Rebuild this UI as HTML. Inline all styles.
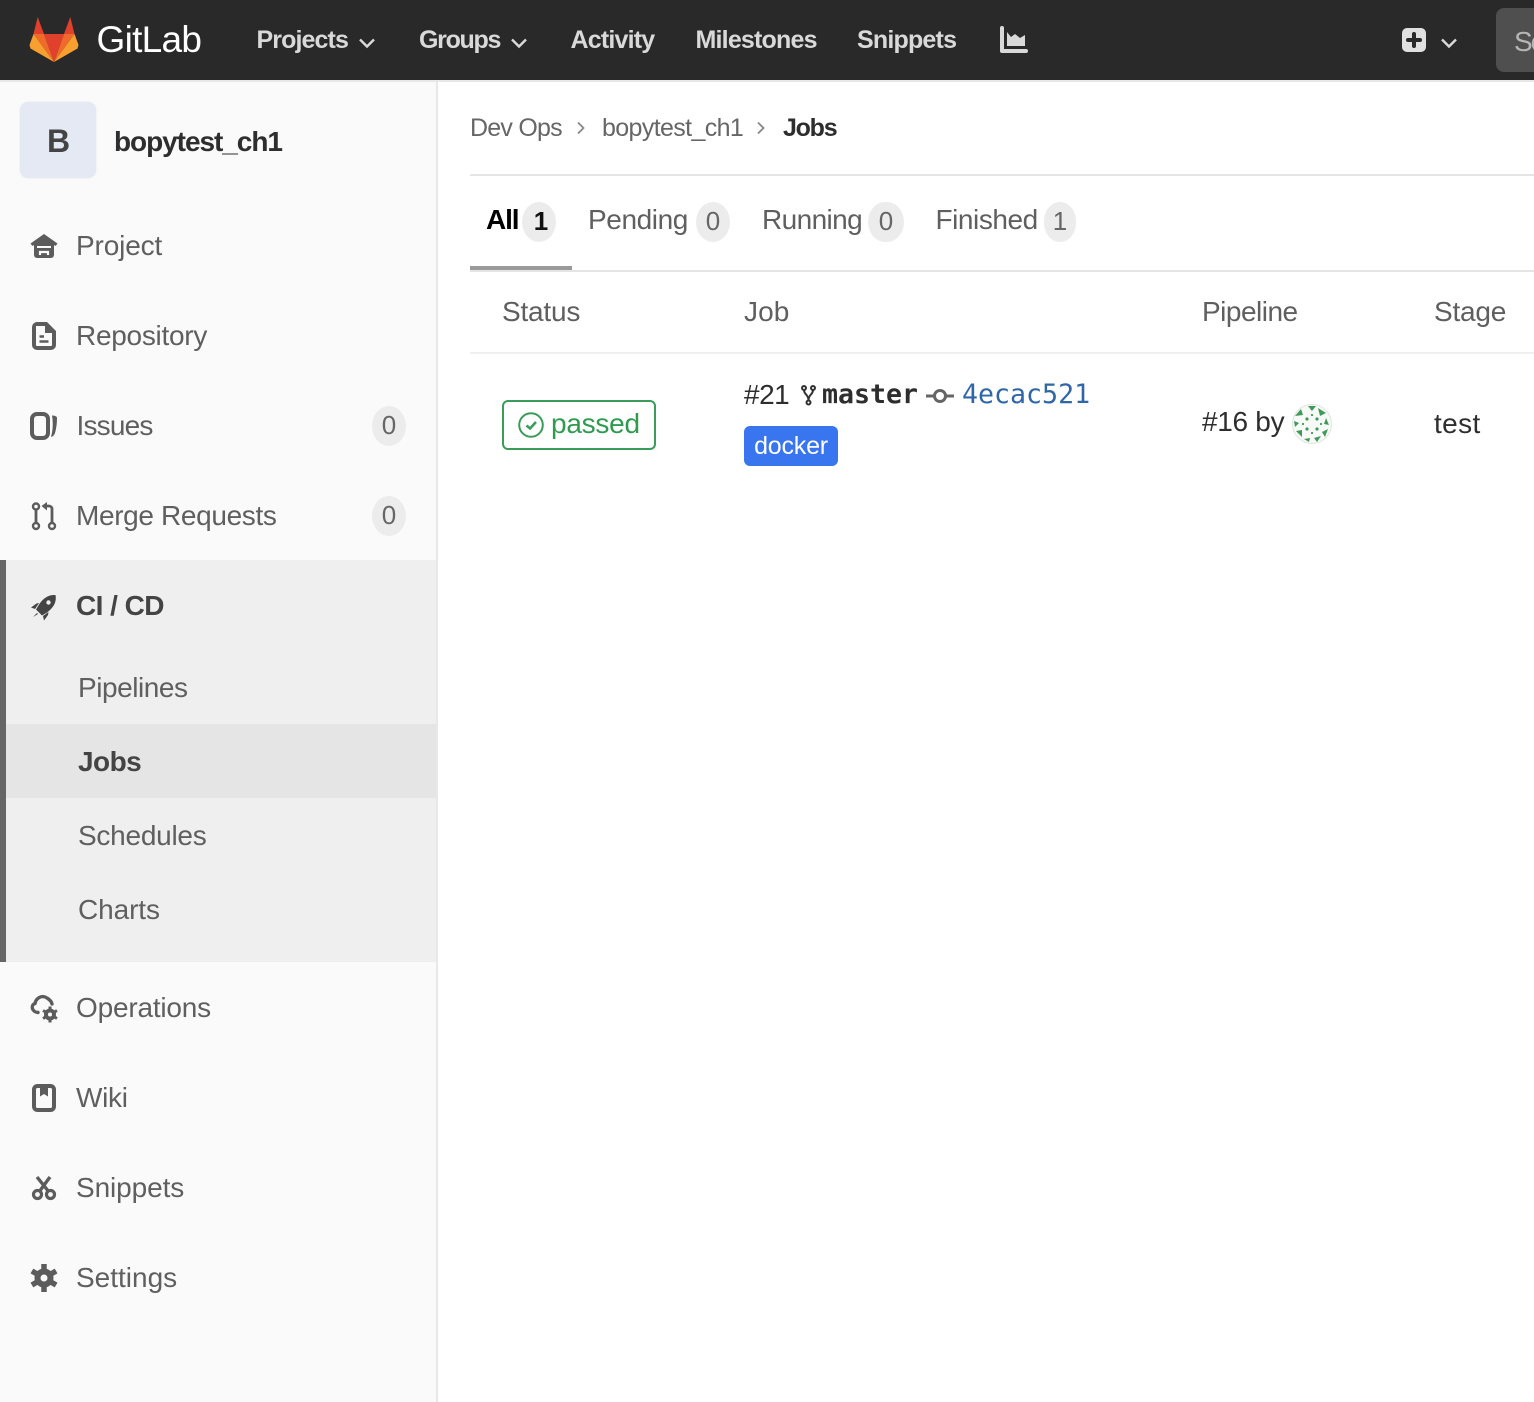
<!DOCTYPE html>
<html lang="en"><head><meta charset="utf-8"><title>Jobs · bopytest_ch1 · GitLab</title>
<style>
*{box-sizing:border-box}
html,body{margin:0;padding:0;width:1534px;height:1402px;overflow:hidden;background:#fff;font-family:"Liberation Sans",sans-serif}
.t{position:absolute;white-space:nowrap;line-height:40px;height:40px;font-size:28px;color:#5f5f5f}
.b{position:absolute}
svg{position:absolute;overflow:visible}
.nav{color:#d9d9d9;font-size:25px;font-weight:bold;letter-spacing:-.8px}
.pill{position:absolute;background:#ececec;border-radius:17px/20px;text-align:center;line-height:38px;font-size:26px;color:#666;height:40px}
</style></head><body>

<div class="b" style="left:0;top:0;width:1534px;height:80px;background:#292929"></div>
<div class="b" style="left:0;top:80px;width:1534px;height:2px;background:#e8e8e8"></div>
<svg style="left:0;top:0" width="100" height="80"><polygon points="44,34 64,34 54,62" fill="#e0412d"/><polygon points="33.5,34 44,34 54,62" fill="#ef6a2b"/><polygon points="74.5,34 64,34 54,62" fill="#ef6a2b"/><polygon points="33.5,34 29.5,45 30.5,48.5 54,62" fill="#f7a030"/><polygon points="74.5,34 78.5,45 77.5,48.5 54,62" fill="#f7a030"/><polygon points="37.7,17 44,34 33.5,34" fill="#e0412d"/><polygon points="70.3,17 64,34 74.5,34" fill="#e0412d"/></svg>
<span class="t" style="left:96.5px;top:20px;font-size:37px;color:#fff;letter-spacing:-.7px">GitLab</span>
<span class="t nav" style="left:256.5px;top:20px;letter-spacing:-.9px">Projects</span>
<svg style="left:359px;top:38px" width="16" height="10"><path d="M1 1.5 8 8.5 15 1.5" fill="none" stroke="#d9d9d9" stroke-width="2.4"/></svg>
<span class="t nav" style="left:419px;top:20px;letter-spacing:-1.3px">Groups</span>
<svg style="left:511px;top:38px" width="16" height="10"><path d="M1 1.5 8 8.5 15 1.5" fill="none" stroke="#d9d9d9" stroke-width="2.4"/></svg>
<span class="t nav" style="left:570.5px;top:20px">Activity</span>
<span class="t nav" style="left:695.5px;top:20px">Milestones</span>
<span class="t nav" style="left:857px;top:20px">Snippets</span>
<svg style="left:1000px;top:26px" width="28" height="28"><path d="M2 2V25H26" fill="none" stroke="#d9d9d9" stroke-width="4" stroke-linecap="round" stroke-linejoin="round"/><path d="M7 20V6l4 5 4-3 5 4 5-3v11z" fill="#d9d9d9"/></svg>
<svg style="left:1402px;top:28px" width="24" height="24"><rect width="24" height="24" rx="5" fill="#e0e0e0"/><path d="M12 6v12M6 12h12" stroke="#292929" stroke-width="4" stroke-linecap="round"/></svg>
<svg style="left:1441px;top:38px" width="16" height="10"><path d="M1 1.5 8 8.5 15 1.5" fill="none" stroke="#d9d9d9" stroke-width="2.4"/></svg>
<div class="b" style="left:1496px;top:8px;width:60px;height:64px;background:#4f4f4f;border-radius:8px"></div>
<span class="t" style="left:1514px;top:22px;color:#b5b5b5;font-size:28px;letter-spacing:-2px">Se</span>

<div class="b" style="left:0;top:82px;width:436px;height:1320px;background:#fafafa"></div>
<div class="b" style="left:436px;top:82px;width:2px;height:1320px;background:#e8e8e8"></div>
<div class="b" style="left:20px;top:102px;width:76px;height:76px;background:#e5e9f3;border-radius:8px;box-shadow:0 0 2px rgba(0,0,0,.08)"></div>
<span class="t" style="left:20.5px;top:121px;width:76px;text-align:center;font-weight:bold;font-size:32px;color:#444">B</span>
<span class="t" style="left:114px;top:122px;font-weight:bold;color:#2e2e2e;letter-spacing:-1.05px">bopytest_ch1</span>

<svg style="left:30px;top:232px" width="28" height="28"><path d="M14 2 .5 11.5 2.5 14 4 13V23a3 3 0 0 0 3 3H21a3 3 0 0 0 3-3V13l1.500 1 2-2.500z" fill="#5c5c5c"/><path d="M7 14H21V16H7z" fill="#fafafa"/><path d="M10 23V20h8v3" fill="none" stroke="#fafafa" stroke-width="2.2"/></svg>
<span class="t" style="left:76px;top:226px;letter-spacing:-.15px">Project</span>
<svg style="left:32px;top:322px" width="24" height="28"><path d="M5 0H15L24 9V23a5 5 0 0 1-5 5H5a5 5 0 0 1-5-5V5a5 5 0 0 1 5-5z" fill="#5c5c5c"/><path d="M4 4H13V11H20V23a1 1 0 0 1-1 1H5a1 1 0 0 1-1-1z" fill="#fafafa"/><path d="M7.5 14.5H12M7.5 19.5H16.5" stroke="#5c5c5c" stroke-width="2.4"/></svg>
<span class="t" style="left:76px;top:316px;letter-spacing:-.28px">Repository</span>
<svg style="left:30px;top:412px" width="28" height="28"><rect x="2" y="2" width="16" height="24" rx="5" fill="none" stroke="#5c5c5c" stroke-width="4"/><path d="M22 3.5c2 0 5 .5 5 2.500 0 6-.8 11-2 15-.6 2-2 3.500-4 4 1.500-5 2.500-13 1-21.500z" fill="#5c5c5c"/></svg>
<span class="t" style="left:76.5px;top:406px;letter-spacing:-.8px">Issues</span>
<div class="pill" style="left:372px;top:406px;width:34px">0</div>
<svg style="left:32px;top:502px" width="24" height="28"><circle cx="4" cy="4.5" r="3" fill="none" stroke="#5c5c5c" stroke-width="2.4"/><circle cx="4" cy="24" r="3" fill="none" stroke="#5c5c5c" stroke-width="2.4"/><circle cx="20" cy="24" r="3" fill="none" stroke="#5c5c5c" stroke-width="2.4"/><path d="M4 8V21M20 21V7a3 3 0 0 0-3-3H13" fill="none" stroke="#5c5c5c" stroke-width="2.8"/><path d="M15 0 9.500 4 15 8.500z" fill="#5c5c5c"/></svg>
<span class="t" style="left:76px;top:496px;letter-spacing:-.35px">Merge Requests</span>
<div class="pill" style="left:372px;top:496px;width:34px">0</div>

<div class="b" style="left:0;top:560px;width:436px;height:402px;background:#efefef"></div>
<div class="b" style="left:0;top:560px;width:6px;height:402px;background:#666"></div>
<svg style="left:30px;top:594px" width="28" height="28"><path d="M25.500 1c1.200 6-1 12-8.500 17.500l-5 3-6-6 3-5C14 3 19.500.5 25.500 1z" fill="#444"/><circle cx="18.500" cy="8.500" r="2.200" fill="#efefef"/><path d="M1 13.500 6.500 9.500 9 9 5 15zM14 26.500l4-5.500.5-3-5.500 4zM3 23l5-3-1-1z" fill="#444"/></svg>
<span class="t" style="left:76px;top:586px;font-weight:bold;color:#444;letter-spacing:-.55px">CI / CD</span>
<span class="t" style="left:78px;top:668px;letter-spacing:-.45px">Pipelines</span>
<div class="b" style="left:6px;top:724px;width:430px;height:74px;background:#e5e5e5"></div>
<span class="t" style="left:78px;top:742px;font-weight:bold;color:#444;letter-spacing:-.55px">Jobs</span>
<span class="t" style="left:78px;top:816px;letter-spacing:-.25px">Schedules</span>
<span class="t" style="left:78px;top:890px;letter-spacing:-.1px">Charts</span>

<svg style="left:30px;top:994px" width="28" height="28"><path d="M8 18.500C1.500 18 .5 11 5 9.500 6 4 12 .5 17 4c2.500 1.500 4.500 3.500 5 6" fill="none" stroke="#5c5c5c" stroke-width="3.4" stroke-linecap="round"/><circle cx="20" cy="20.5" r="4.5" fill="none" stroke="#5c5c5c" stroke-width="3"/><path d="M20 12.500v16M13 16.500l14 8M27 16.500l-14 8" stroke="#5c5c5c" stroke-width="3"/><circle cx="20" cy="20.5" r="2" fill="#fafafa"/></svg>
<span class="t" style="left:76px;top:988px;letter-spacing:-.2px">Operations</span>
<svg style="left:32px;top:1084px" width="24" height="28"><rect x="2" y="2" width="20" height="24" rx="3.5" fill="none" stroke="#5c5c5c" stroke-width="4"/><path d="M8 2h8v10.500l-4-2.500-4 2.500z" fill="#5c5c5c"/></svg>
<span class="t" style="left:76px;top:1078px;letter-spacing:-.3px">Wiki</span>
<svg style="left:32px;top:1174px" width="24" height="28"><path d="M5 3 17 18M18 3 7 18" stroke="#5c5c5c" stroke-width="3.4" fill="none"/><circle cx="5.5" cy="20.5" r="4" fill="#fafafa" stroke="#5c5c5c" stroke-width="3.2"/><circle cx="18.5" cy="20.5" r="4" fill="#fafafa" stroke="#5c5c5c" stroke-width="3.2"/></svg>
<span class="t" style="left:76px;top:1168px;letter-spacing:-.1px">Snippets</span>
<svg style="left:30px;top:1264px" width="28" height="28"><circle cx="14" cy="14" r="6.5" fill="none" stroke="#5c5c5c" stroke-width="6"/><path d="M14 0v28M1.900 7 26.100 21M26.100 7 1.900 21" stroke="#5c5c5c" stroke-width="5.5"/><circle cx="14" cy="14" r="3.5" fill="#fafafa"/></svg>
<span class="t" style="left:76px;top:1258px;letter-spacing:0">Settings</span>

<span class="t" style="left:470px;top:108px;font-size:25px;letter-spacing:-.77px;color:#666">Dev Ops</span>
<svg style="left:576px;top:121px" width="10" height="14"><path d="M2 1.500 7.500 7 2 12.500" fill="none" stroke="#888" stroke-width="1.8"/></svg>
<span class="t" style="left:602px;top:108px;font-size:25px;letter-spacing:-.63px;color:#666">bopytest_ch1</span>
<svg style="left:756px;top:121px" width="10" height="14"><path d="M2 1.500 7.500 7 2 12.500" fill="none" stroke="#888" stroke-width="1.8"/></svg>
<span class="t" style="left:783px;top:108px;font-size:25px;font-weight:bold;color:#2e2e2e;letter-spacing:-1.25px">Jobs</span>
<div class="b" style="left:470px;top:174px;width:1064px;height:2px;background:#e5e5e5"></div>

<span class="t" style="left:486px;top:200px;font-weight:bold;color:#000;letter-spacing:-1.15px">All</span>
<div class="b" style="left:522px;top:202px;width:34px;height:40px;background:#ececec;border-radius:17px/20px"></div>
<span class="t" style="left:524px;top:201px;width:34px;text-align:center;font-size:26px;color:#111;font-weight:bold">1</span>
<span class="t" style="left:588px;top:200px;letter-spacing:-.4px">Pending</span>
<div class="pill" style="left:696px;top:202px;width:34px">0</div>
<span class="t" style="left:762px;top:200px;letter-spacing:-.6px">Running</span>
<div class="pill" style="left:868px;top:202px;width:36px">0</div>
<span class="t" style="left:935.5px;top:200px;letter-spacing:-.45px">Finished</span>
<div class="pill" style="left:1044px;top:202px;width:32px">1</div>
<div class="b" style="left:470px;top:270px;width:1064px;height:2px;background:#e5e5e5"></div>
<div class="b" style="left:470px;top:266px;width:102px;height:4px;background:#9a9a9a"></div>

<span class="t" style="left:502px;top:292px;letter-spacing:-.2px">Status</span>
<span class="t" style="left:744px;top:292px;letter-spacing:.1px">Job</span>
<span class="t" style="left:1202px;top:292px;letter-spacing:-.5px">Pipeline</span>
<span class="t" style="left:1434px;top:292px;letter-spacing:-.2px">Stage</span>
<div class="b" style="left:470px;top:352px;width:1064px;height:2px;background:#efefef"></div>

<div class="b" style="left:502px;top:400px;width:154px;height:50px;border:2px solid #3a9c58;border-radius:6px;background:#fff"></div>
<svg style="left:518px;top:412px" width="26" height="26"><circle cx="13" cy="13" r="11.8" fill="none" stroke="#3a9c58" stroke-width="2"/><path d="M8.500 13.500 12 16.500 18 10" fill="none" stroke="#3a9c58" stroke-width="2.6"/></svg>
<span class="t" style="left:551px;top:404px;color:#2f9a50;letter-spacing:-.25px">passed</span>

<span class="t" style="left:744px;top:375px;color:#2e2e2e;letter-spacing:-.5px">#21</span>
<svg style="left:801px;top:385px" width="15" height="21"><circle cx="3" cy="3" r="2" fill="none" stroke="#333" stroke-width="2"/><circle cx="12" cy="3" r="2" fill="none" stroke="#333" stroke-width="2"/><circle cx="7.5" cy="17.5" r="2" fill="none" stroke="#333" stroke-width="2"/><path d="M3 5C3 10 7.500 9 7.500 15.500M12 5C12 10 7.500 9 7.500 15.500" fill="none" stroke="#333" stroke-width="2"/></svg>
<span class="t" style="left:822px;top:375px;font-family:'DejaVu Sans Mono',monospace;font-weight:bold;font-size:26.6px;color:#2e2e2e">master</span>
<svg style="left:926px;top:386px" width="28" height="20"><path d="M0 10H28" stroke="#666" stroke-width="3"/><circle cx="14" cy="10" r="5.5" fill="#fff" stroke="#666" stroke-width="3"/></svg>
<span class="t" style="left:962px;top:375px;font-family:'DejaVu Sans Mono',monospace;font-size:26.6px;color:#2f66a8">4ecac521</span>
<div class="b" style="left:744px;top:426px;width:94px;height:40px;background:#3875ee;border-radius:6px"></div>
<span class="t" style="left:744px;top:426px;width:94px;text-align:center;color:#fff;font-size:25px;letter-spacing:-.2px">docker</span>

<span class="t" style="left:1202px;top:402px;color:#2e2e2e;letter-spacing:-.3px">#16 by</span>
<svg style="left:1292px;top:404px" width="40" height="40"><circle cx="20" cy="20" r="19.5" fill="#f7faf7" stroke="#dfe6df" stroke-width="1"/><g fill="#3f9a5a"><path d="M16 2h8l-4 5zM26 4l8 5-6 3zM34 14l3 7-5-1zM36 25l-3 8-3-5zM29 32l-4 6-3-4zM18 34l-1 4-5-3zM10 33 4 27l6-1zM3 23l-1-6 5 2zM3 12l6-7 2 6z"/><circle cx="15" cy="15" r="1.6"/><circle cx="25" cy="15" r="1.6"/><circle cx="15" cy="25" r="1.6"/><circle cx="25" cy="25" r="1.6"/><circle cx="20" cy="11" r="1.1"/><circle cx="20" cy="29" r="1.1"/><circle cx="11" cy="20" r="1.1"/><circle cx="29" cy="20" r="1.1"/></g></svg>
<span class="t" style="left:1434px;top:404px;color:#2e2e2e;letter-spacing:.4px">test</span>
</body></html>
